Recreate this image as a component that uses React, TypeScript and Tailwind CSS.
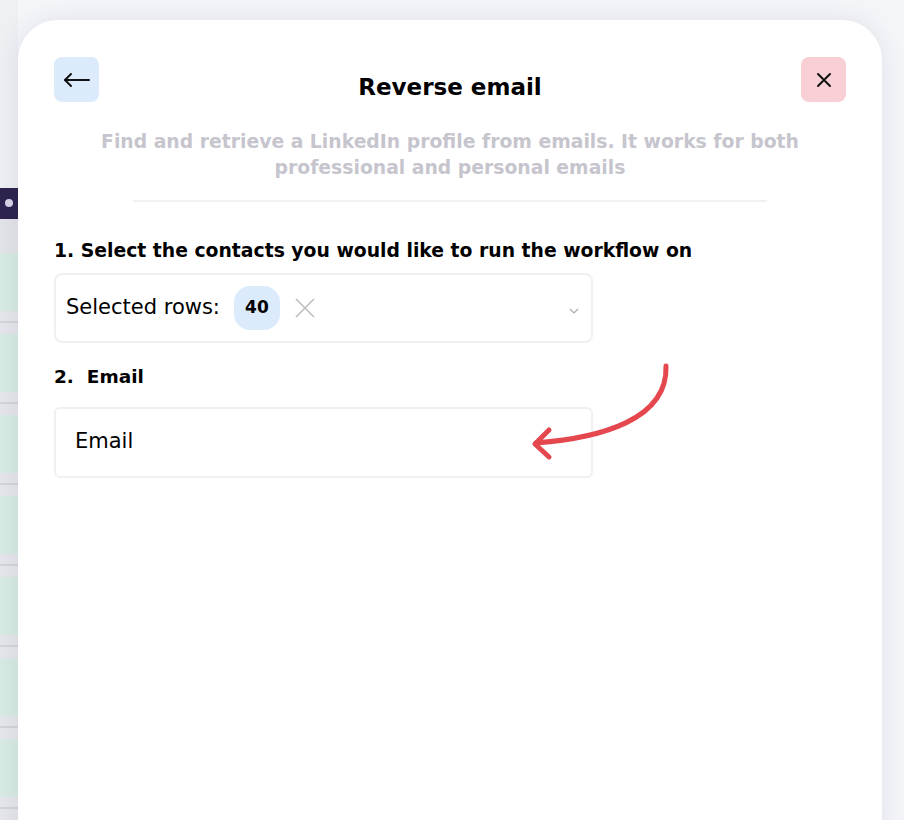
import React from "react";

function LeftStrip() {
  const rows = Array.from({ length: 7 });
  return (
    <div className="w-[18px] shrink-0 flex flex-col bg-[#e4e5ea]">
      <div className="h-[196px] bg-[#eef0f4]" />
      <div className="h-[32px] bg-[#2d2450] flex items-center justify-center">
        <div className="w-[8px] h-[8px] rounded-full bg-[#d9d6ea]" />
      </div>
      <div className="h-[36px] bg-[#e4e5ea]" />
      {rows.map((_, i) => (
        <div key={i} className="flex flex-col">
          <div className="h-[58px] bg-[#d8ebe4]" />
          <div className="h-[10px] bg-[#e6e7ec]" />
          <div className="h-[2px] bg-[#d4d5da]" />
          <div className="h-[11px] bg-[#e6e7ec]" />
        </div>
      ))}
    </div>
  );
}

export default function App() {
  return (
    <div
      className="w-[904px] h-[820px] overflow-hidden bg-[#f5f6fa] flex"
      style={{ fontFamily: "'DejaVu Sans', sans-serif" }}
    >
      <LeftStrip />
      <div className="pt-[20px] shrink-0">
        <div className="relative w-[864px] h-[820px] bg-white rounded-t-[40px] shadow-[0_0_28px_rgba(30,35,60,0.10)] px-[36px] pt-[37px]">
          {/* header */}
          <div className="flex items-start justify-between">
            <button className="w-[45px] h-[45px] rounded-[8px] bg-[#dcebfc] flex items-center justify-center">
              <svg width="28" height="16" viewBox="0 0 28 16" fill="none" stroke="#111" strokeWidth="2" strokeLinecap="round" strokeLinejoin="round">
                <path d="M26 8H2" />
                <path d="M8 2L2 8l6 6" />
              </svg>
            </button>
            <h1 className="mt-[13px] text-[23px] font-semibold text-black">Reverse email</h1>
            <button className="w-[45px] h-[45px] rounded-[8px] bg-[#f8cfd4] flex items-center justify-center">
              <svg width="16" height="16" viewBox="0 0 16 16" fill="none" stroke="#111" strokeWidth="2" strokeLinecap="round">
                <path d="M2 2l12 12M14 2L2 14" />
              </svg>
            </button>
          </div>
          <p className="mt-[24px] mx-auto w-[720px] text-center text-[18.8px] leading-[26px] font-semibold text-[#c6c5cd]">
            Find and retrieve a LinkedIn profile from emails. It works for both professional and personal emails
          </p>
          <div className="mt-[19px] mx-auto w-[634px] h-[2px] bg-[#f1f1f3]" />

          <div className="mt-[36px] text-[18.8px] font-semibold text-black leading-[26px]">
            1. Select the contacts you would like to run the workflow on
          </div>
          <div className="mt-[9px] w-[539px] h-[70px] rounded-[8px] border-2 border-[#f0f0f3] flex items-center pl-[10px] pr-[12px]">
            <span className="text-[21px] text-black">Selected rows:</span>
            <span className="ml-[14px] w-[46px] h-[44px] rounded-[16px] bg-[#dcebfc] flex items-center justify-center text-[17px] font-bold text-black">
              40
            </span>
            <svg className="ml-[15px]" width="20" height="20" viewBox="0 0 20 20" fill="none" stroke="#bdbdc2" strokeWidth="1.6">
              <path d="M1 1l18 18M19 1L1 19" />
            </svg>
            <svg className="ml-auto mt-[6px]" width="10" height="6" viewBox="0 0 10 6" fill="none" stroke="#aaaab0" strokeWidth="1.2">
              <path d="M1 1l4 4 4-4" />
            </svg>
          </div>

          <div className="mt-[21px] text-[18.5px] font-semibold text-black leading-[26px]">
            2.&nbsp; Email
          </div>
          <div className="mt-[17px] w-[539px] h-[71px] rounded-[6px] border-2 border-[#f0f0f3] flex items-center pl-[19px]">
            <span className="text-[21px] text-black">Email</span>
          </div>

          <svg className="absolute left-0 top-0 pointer-events-none" width="864" height="800" viewBox="18 20 864 800" fill="none">
            <path d="M666 366 C668 420 600 438 536 443" stroke="#e5474e" strokeWidth="5" strokeLinecap="round" />
            <path d="M549 430 L535 444 L549 457" stroke="#e5474e" strokeWidth="5" strokeLinecap="round" strokeLinejoin="round" />
          </svg>
        </div>
      </div>
      <div className="flex-1" />
    </div>
  );
}
